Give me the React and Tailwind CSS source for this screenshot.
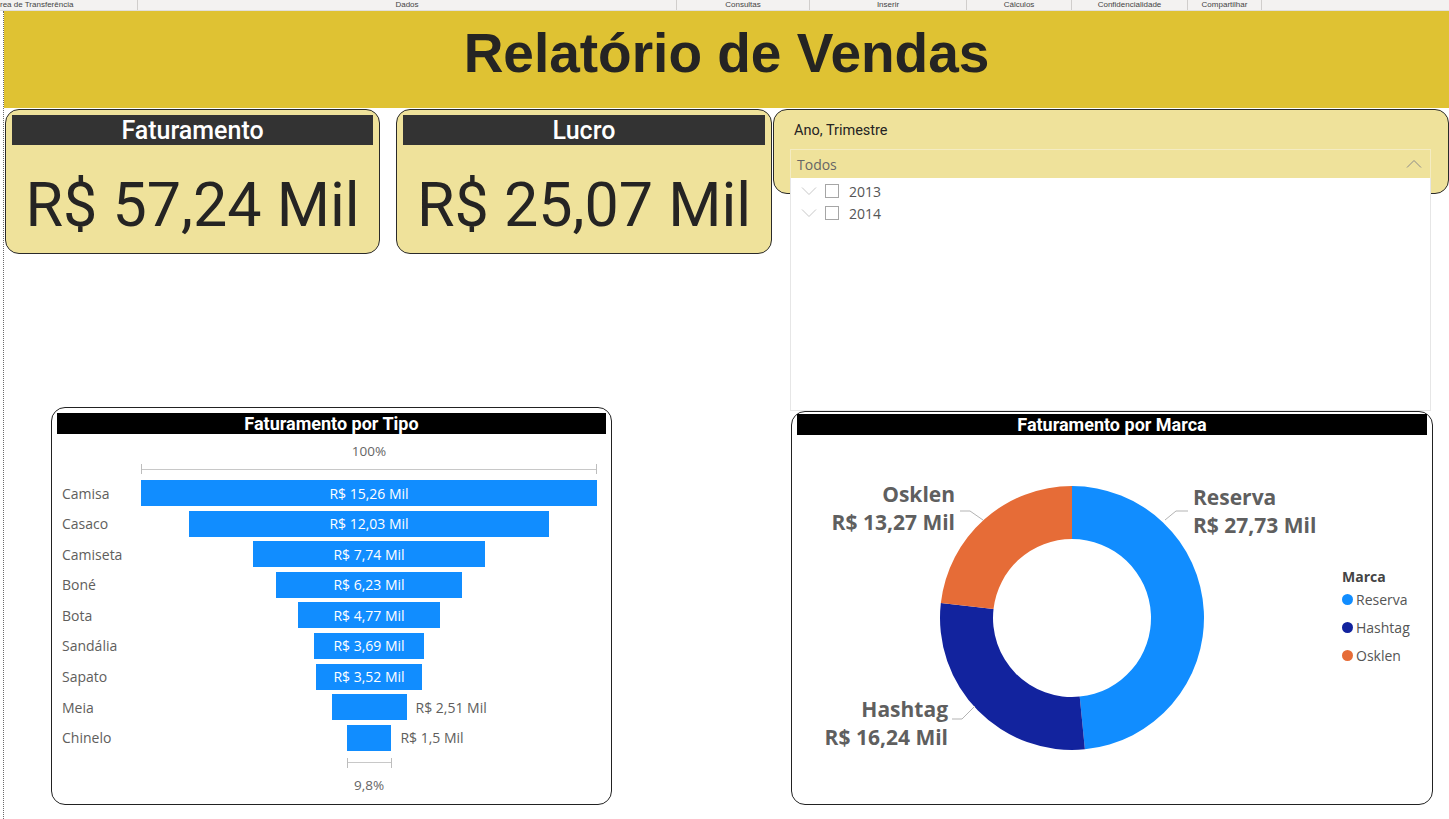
const tipos = [
  { nome: 'Camisa', valor: 15.26, rotulo: 'R$ 15,26 Mil' },
  { nome: 'Casaco', valor: 12.03, rotulo: 'R$ 12,03 Mil' },
  { nome: 'Camiseta', valor: 7.74, rotulo: 'R$ 7,74 Mil' },
  { nome: 'Boné', valor: 6.23, rotulo: 'R$ 6,23 Mil' },
  { nome: 'Bota', valor: 4.77, rotulo: 'R$ 4,77 Mil' },
  { nome: 'Sandália', valor: 3.69, rotulo: 'R$ 3,69 Mil' },
  { nome: 'Sapato', valor: 3.52, rotulo: 'R$ 3,52 Mil' },
  { nome: 'Meia', valor: 2.51, rotulo: 'R$ 2,51 Mil' },
  { nome: 'Chinelo', valor: 1.5, rotulo: 'R$ 1,5 Mil' },
];

const marcas = [
  { nome: 'Reserva', valor: 27.73, cor: '#118dff' },
  { nome: 'Hashtag', valor: 16.24, cor: '#12239e' },
  { nome: 'Osklen', valor: 13.27, cor: '#e66c37' },
];

const AREA = 456;
const MAX = 15.26;

const ribbon = [
  { label: 'rea de Transferência', w: 'w-[138px]', align: 'justify-start' },
  { label: 'Dados', w: 'w-[539px]', align: 'justify-center' },
  { label: 'Consultas', w: 'w-[133px]', align: 'justify-center' },
  { label: 'Inserir', w: 'w-[157px]', align: 'justify-center' },
  { label: 'Cálculos', w: 'w-[105px]', align: 'justify-center' },
  { label: 'Confidencialidade', w: 'w-[116px]', align: 'justify-center' },
  { label: 'Compartilhar', w: 'w-[74px]', align: 'justify-center' },
];

function arc(cx, cy, r0, r1, a0, a1) {
  const p = (r, a) => [cx + r * Math.sin(a), cy - r * Math.cos(a)];
  const large = a1 - a0 > Math.PI ? 1 : 0;
  const [x0, y0] = p(r1, a0);
  const [x1, y1] = p(r1, a1);
  const [x2, y2] = p(r0, a1);
  const [x3, y3] = p(r0, a0);
  return `M${x0} ${y0} A${r1} ${r1} 0 ${large} 1 ${x1} ${y1} L${x2} ${y2} A${r0} ${r0} 0 ${large} 0 ${x3} ${y3}Z`;
}

function KpiCard({ titulo, valor, w }) {
  return (
    <div className={`${w} h-[145px] bg-[#efe29b] border border-[#2a2a2a] rounded-[14px] px-[6px] pt-[5px] flex flex-col`}>
      <div className="h-[30px] bg-[#333333] flex items-center justify-center text-white font-['Roboto',sans-serif] font-medium text-[25px] leading-none">
        {titulo}
      </div>
      <div className="flex-1 flex items-center justify-center pt-[12px] text-[#252423] font-['Roboto',sans-serif] text-[61px] leading-none">
        {valor}
      </div>
    </div>
  );
}

function Funil() {
  return (
    <div className="w-[561px] h-[398px] bg-white border border-[#222] rounded-[14px] px-[5px] pt-[5px]">
      <div className="h-[21px] bg-black flex items-center justify-center text-white font-['Roboto',sans-serif] font-bold text-[18px] leading-none">
        Faturamento por Tipo
      </div>
      <div className="font-['Open_Sans',sans-serif]">
        <div className="flex pl-[84px]">
          <div className="w-[456px] flex flex-col items-center">
            <div className="mt-[8px] text-[13.5px] leading-[18px] text-[#666]">100%</div>
            <div className="mt-[4px] w-full h-[10px] border-x border-[#bdbdbd] flex items-center">
              <div className="w-full h-px bg-[#c8c8c8]" />
            </div>
          </div>
        </div>
        <div className="mt-[6px] flex flex-col gap-[4.6px]">
          {tipos.map((t) => {
            const w = (t.valor / MAX) * AREA;
            const dentro = w > 90;
            return (
              <div key={t.nome} className="flex items-center h-[26px]">
                <div className="w-[84px] pl-[5px] text-[14px] text-[#605e5c]">{t.nome}</div>
                <div className="w-[456px] grid grid-cols-[1fr_auto_1fr] items-center">
                  <div />
                  <div
                    className="h-[26px] bg-[#118dff] flex items-center justify-center text-white text-[14px] whitespace-nowrap"
                    style={{ width: `${w}px` }}
                  >
                    {dentro ? t.rotulo : ''}
                  </div>
                  <div className="pl-[9px] text-[14px] text-[#605e5c] whitespace-nowrap">{dentro ? '' : t.rotulo}</div>
                </div>
              </div>
            );
          })}
        </div>
        <div className="flex pl-[84px]">
          <div className="w-[456px] flex flex-col items-center">
            <div className="mt-[7px] w-[45px] h-[10px] border-x border-[#bdbdbd] flex items-center">
              <div className="w-full h-px bg-[#c8c8c8]" />
            </div>
            <div className="mt-[8px] text-[13.5px] leading-[18px] text-[#666]">9,8%</div>
          </div>
        </div>
      </div>
    </div>
  );
}

function Rosca() {
  const cx = 280, cy = 177, r1 = 132, r0 = 79;
  const total = marcas.reduce((s, m) => s + m.valor, 0);
  let acc = 0;
  const fatias = marcas.map((m) => {
    const a0 = (acc / total) * Math.PI * 2;
    acc += m.valor;
    const a1 = (acc / total) * Math.PI * 2;
    return { ...m, d: arc(cx, cy, r0, r1, a0, a1) };
  });
  const lbl = "font-['Open_Sans',sans-serif]";
  return (
    <div className="w-[642px] h-[394px] mt-[4px] bg-white border border-[#222] rounded-[14px] px-[5px] pt-[2px]">
      <div className="h-[21px] bg-black flex items-center justify-center text-white font-['Roboto',sans-serif] font-bold text-[18px] leading-none">
        Faturamento por Marca
      </div>
      <div className="flex -ml-[5px] mt-[6px]">
        <svg width="550" height="360" className="shrink-0">
          {fatias.map((f) => (
            <path key={f.nome} d={f.d} fill={f.cor} />
          ))}
          <g stroke="#b3b3b3" strokeWidth="1" fill="none">
            <polyline points="168,70 178,70 191,79" />
            <polyline points="373,79 384,70 396,70" />
            <polyline points="160,278 170,278 183,265" />
          </g>
          <g className={lbl} fontWeight="700" fontSize="21" fill="#5f5f5f">
            <text x="163" y="61" textAnchor="end">Osklen</text>
            <text x="163" y="89" textAnchor="end">R$ 13,27 Mil</text>
            <text x="401" y="64">Reserva</text>
            <text x="401" y="92">R$ 27,73 Mil</text>
            <text x="156" y="276" textAnchor="end">Hashtag</text>
            <text x="156" y="304" textAnchor="end">R$ 16,24 Mil</text>
          </g>
        </svg>
        <div className={`${lbl} pt-[126px] text-[14px]`}>
          <div className="font-bold text-[#444] leading-[20px]">Marca</div>
          <div className="mt-[2px] flex flex-col gap-[8px]">
            {marcas.map((m) => (
              <div key={m.nome} className="flex items-center h-[20px] text-[#555]">
                <span className="w-[11px] h-[11px] rounded-full mr-[3px]" style={{ background: m.cor }} />
                {m.nome}
              </div>
            ))}
          </div>
        </div>
      </div>
    </div>
  );
}

function Segmentador() {
  return (
    <div className="relative w-[676px] h-[85px] bg-[#efe29b] border border-[#2a2a2a] rounded-[14px]">
      <div className="pl-[20px] pt-[11px] text-[14.5px] leading-[20px] text-[#252423] font-['Roboto',sans-serif]">
        Ano, Trimestre
      </div>
      <div className="ml-[16px] mt-[8px] w-[641px] h-[30px] border border-[#f4ecc2] flex items-center justify-between pl-[6px] pr-[8px] font-['Open_Sans',sans-serif] text-[14px] text-[#666]">
        <span>Todos</span>
        <svg width="16" height="10" viewBox="0 0 16 10" fill="none" stroke="#8a8a8a" strokeWidth="1">
          <polyline points="1,8.5 8,1.5 15,8.5" />
        </svg>
      </div>
      <div className="absolute left-[16px] top-[68px] w-[641px] h-[233px] bg-white border border-t-0 border-[#e6e6e6] pt-[2px] font-['Open_Sans',sans-serif] text-[14px] text-[#555] z-10">
        {['2013', '2014'].map((ano) => (
          <div key={ano} className="flex items-center h-[22px] pl-[10px]">
            <svg width="16" height="10" viewBox="0 0 16 10" fill="none" stroke="#c8c8c8" strokeWidth="1">
              <polyline points="1,1.5 8,8.5 15,1.5" />
            </svg>
            <span className="ml-[8px] w-[14px] h-[14px] border border-[#a6a6a6] bg-white" />
            <span className="ml-[10px]">{ano}</span>
          </div>
        ))}
      </div>
    </div>
  );
}

export default function App() {
  return (
    <div className="w-[1449px] h-[819px] bg-white overflow-hidden flex flex-col">
      <div className="h-[11px] shrink-0 bg-[#f3f2f1] border-b border-[#e1dfdd] flex font-['Liberation_Sans',Arial,sans-serif] text-[8px] leading-[10px] text-[#444]">
        {ribbon.map((r) => (
          <div key={r.label} className={`${r.w} ${r.align} flex border-r border-[#d0cecc] whitespace-nowrap overflow-hidden`}>
            {r.label}
          </div>
        ))}
      </div>
      <div className="flex-1 ml-[3px] border-l border-dotted border-[#6b6b6b]">
        <div className="h-[97px] bg-[#dfc233] flex justify-center pt-[12px] font-['Liberation_Sans',Arial,sans-serif] font-bold text-[55px] leading-[60px] text-[#252423]">
          Relatório de Vendas
        </div>
        <div className="flex items-start mt-[1px]">
          <div className="ml-[1px]">
            <KpiCard titulo="Faturamento" valor="R$ 57,24 Mil" w="w-[375px]" />
          </div>
          <div className="ml-[16px]">
            <KpiCard titulo="Lucro" valor="R$ 25,07 Mil" w="w-[376px]" />
          </div>
          <div className="ml-[1px]">
            <Segmentador />
          </div>
        </div>
        <div className="flex items-start mt-[153px] ml-[47px]">
          <Funil />
          <div className="ml-[179px]">
            <Rosca />
          </div>
        </div>
      </div>
    </div>
  );
}
